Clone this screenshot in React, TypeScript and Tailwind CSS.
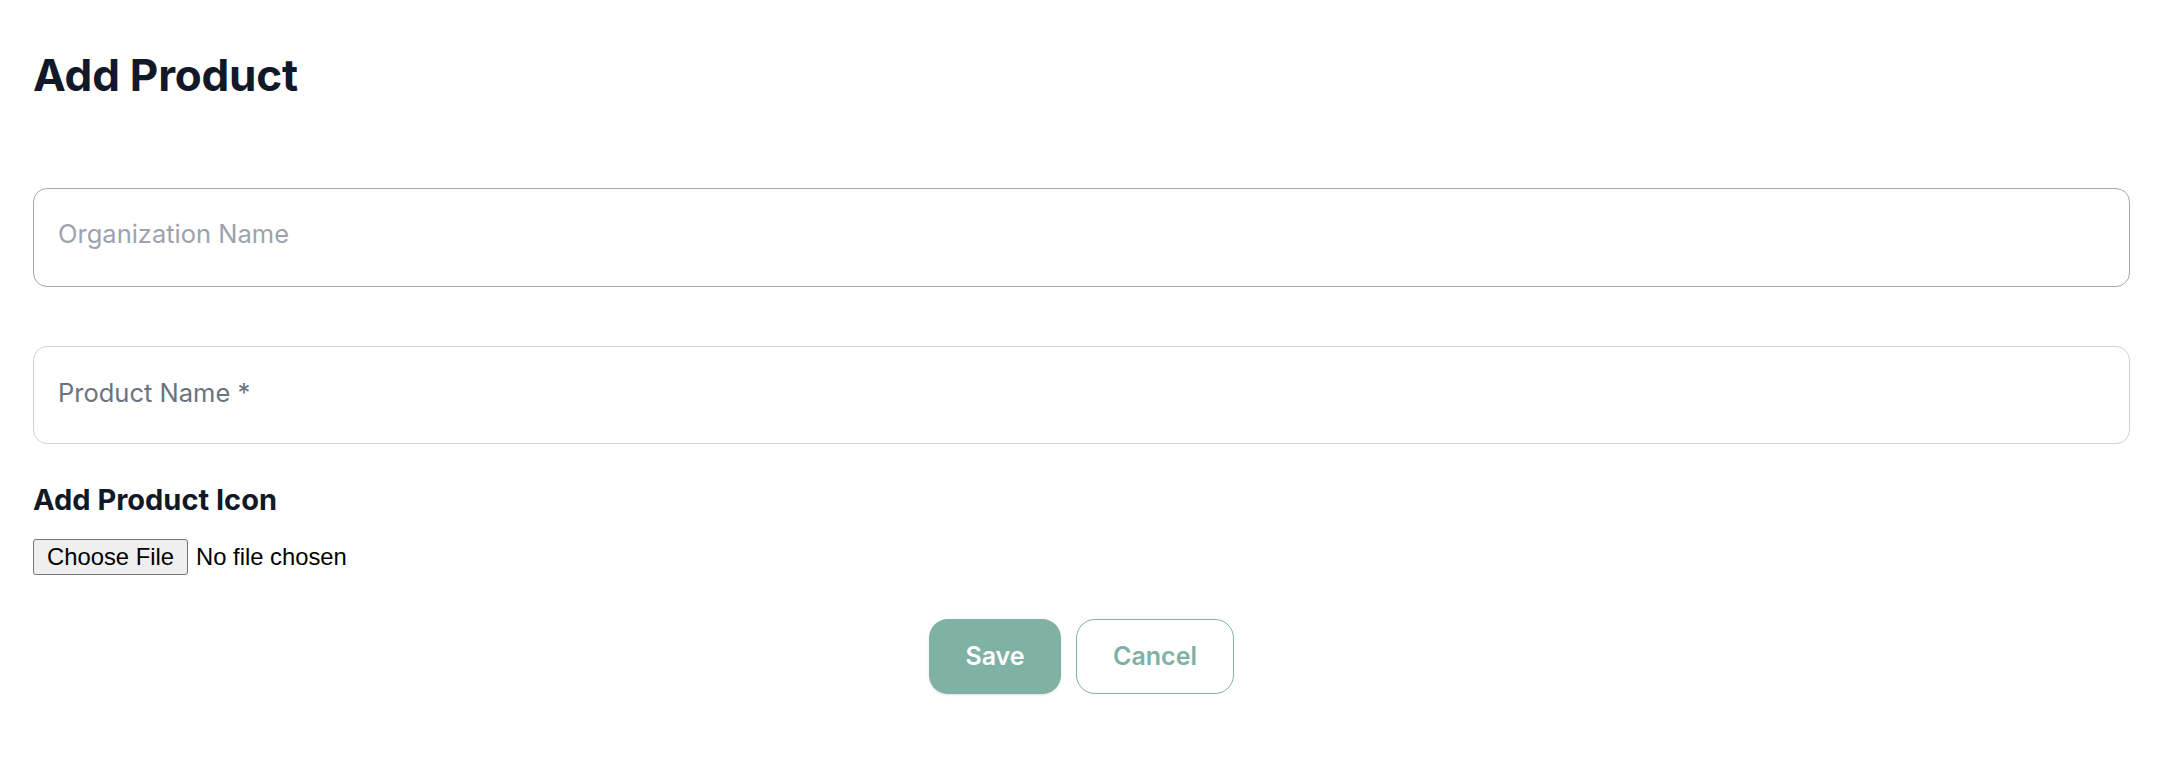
import { useState } from 'react';

export default function App() {
  const [orgName, setOrgName] = useState('');
  const [productName, setProductName] = useState('');
  const [fileName, setFileName] = useState<string | null>(null);

  return (
    <div className="min-h-[758px] w-full bg-white pl-[33px] pr-[34px] pt-[49px] font-['Inter','Noto_Sans',sans-serif]">
      {/* Title */}
      <h1 className="text-[44px] leading-[53px] font-bold tracking-[-0.005em] text-[#111827]">
        Add Product
      </h1>

      <form className="flex flex-col" onSubmit={(e) => e.preventDefault()}>
        {/* Organization */}
        <input
          type="text"
          value={orgName}
          onChange={(e) => setOrgName(e.target.value)}
          placeholder="Organization Name"
          className="mt-[86px] h-[99px] w-full rounded-[14px] border border-[#a8a8a8] bg-white pl-[24px] pr-[24px] pb-[8px] text-[25.5px] text-[#111827] outline-none placeholder:text-[#9ca3af]"
        />

        {/* Product name */}
        <input
          type="text"
          value={productName}
          onChange={(e) => setProductName(e.target.value)}
          placeholder="Product Name *"
          className="mt-[59px] h-[98px] w-full rounded-[14px] border border-[#d2d2d2] bg-white pl-[24px] pr-[24px] pb-[6px] text-[25.5px] text-[#111827] outline-none placeholder:text-[#6b7280]"
        />

        {/* Icon upload */}
        <h2 className="mt-[38px] text-[29px] leading-[35px] font-bold text-[#111827]">
          Add Product Icon
        </h2>
        <label className="mt-[22px] flex items-center gap-[8px] font-['Liberation_Sans',Arial,sans-serif] text-[23.8px] text-black">
          <input
            type="file"
            className="hidden"
            onChange={(e) => setFileName(e.target.files?.[0]?.name ?? null)}
          />
          <span className="flex h-[36px] w-[155px] items-center justify-center rounded-[3px] border border-[#767676] bg-[#efefef] leading-none">
            Choose File
          </span>
          <span className="leading-none">{fileName ?? 'No file chosen'}</span>
        </label>

        {/* Actions */}
        <div className="mt-[44px] flex justify-center gap-[15px]">
          <button
            type="submit"
            className="h-[75px] w-[132px] rounded-[19px] bg-[#7fb1a4] text-[25px] font-semibold text-white shadow-sm"
          >
            Save
          </button>
          <button
            type="button"
            className="h-[75px] w-[158px] rounded-[19px] border border-[#7fb1a4] bg-white text-[25px] font-semibold text-[#7fb1a4]"
          >
            Cancel
          </button>
        </div>
      </form>
    </div>
  );
}
